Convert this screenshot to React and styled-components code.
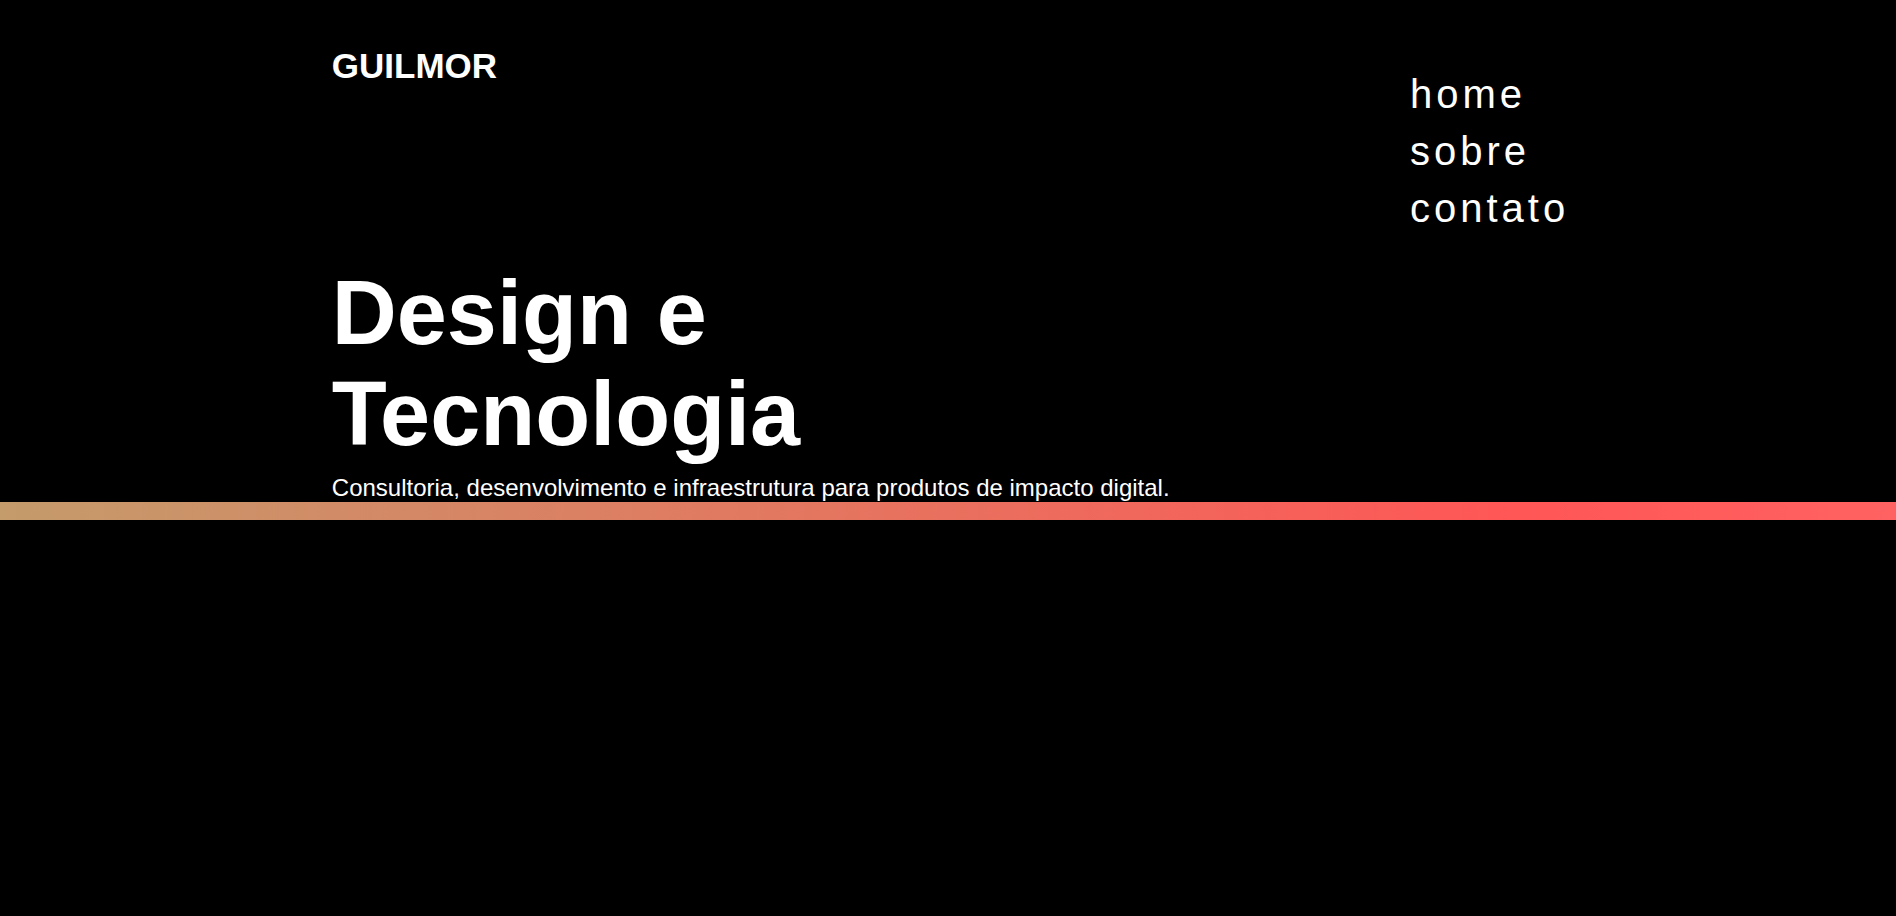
import React from "react";
import styled, { createGlobalStyle } from "styled-components";

const GlobalStyle = createGlobalStyle`
  html, body {
    margin: 0;
    padding: 0;
    background: #000;
    color: #fff;
    font-family: "Liberation Sans", Arial, sans-serif;
  }
  body { min-height: 100vh; }
`;

const Page = styled.div`
  background: #000;
  min-height: 916px;
`;

const Container = styled.div`
  width: 65%;
  margin: 0 auto;
`;

const Header = styled.header`
  display: flex;
  justify-content: space-between;
  align-items: flex-start;
  padding-top: 46px;
`;

const Logo = styled.div`
  font-size: 35px;
  font-weight: 700;
  line-height: normal;
`;

const Nav = styled.ul`
  list-style: none;
  margin: 20px -5px 0 0;
  padding: 0;
`;

const NavItem = styled.li`
  font-size: 40px;
  line-height: 57px;
  letter-spacing: 4px;
  color: #fff;
`;

const Hero = styled.section`
  margin-top: 26px;
`;

const Title = styled.h1`
  margin: 0 0 9px;
  font-size: 90px;
  font-weight: 700;
  line-height: 100.8px;
`;

const Subtitle = styled.p`
  margin: 0;
  font-size: 24px;
  line-height: normal;
`;

const Bar = styled.div`
  height: 18px;
  margin-top: 0;
  background: linear-gradient(to right, #c49b6b 0%, #ff5656 80%, #ff6262 100%);
`;

export default function App() {
  return (
    <Page>
      <GlobalStyle />
      <Container>
        <Header>
          <Logo>GUILMOR</Logo>
          <Nav>
            <NavItem>home</NavItem>
            <NavItem>sobre</NavItem>
            <NavItem>contato</NavItem>
          </Nav>
        </Header>
        <Hero>
          <Title>
            Design e
            <br />
            Tecnologia
          </Title>
          <Subtitle>
            Consultoria, desenvolvimento e infraestrutura para produtos de impacto digital.
          </Subtitle>
        </Hero>
      </Container>
      <Bar />
    </Page>
  );
}
